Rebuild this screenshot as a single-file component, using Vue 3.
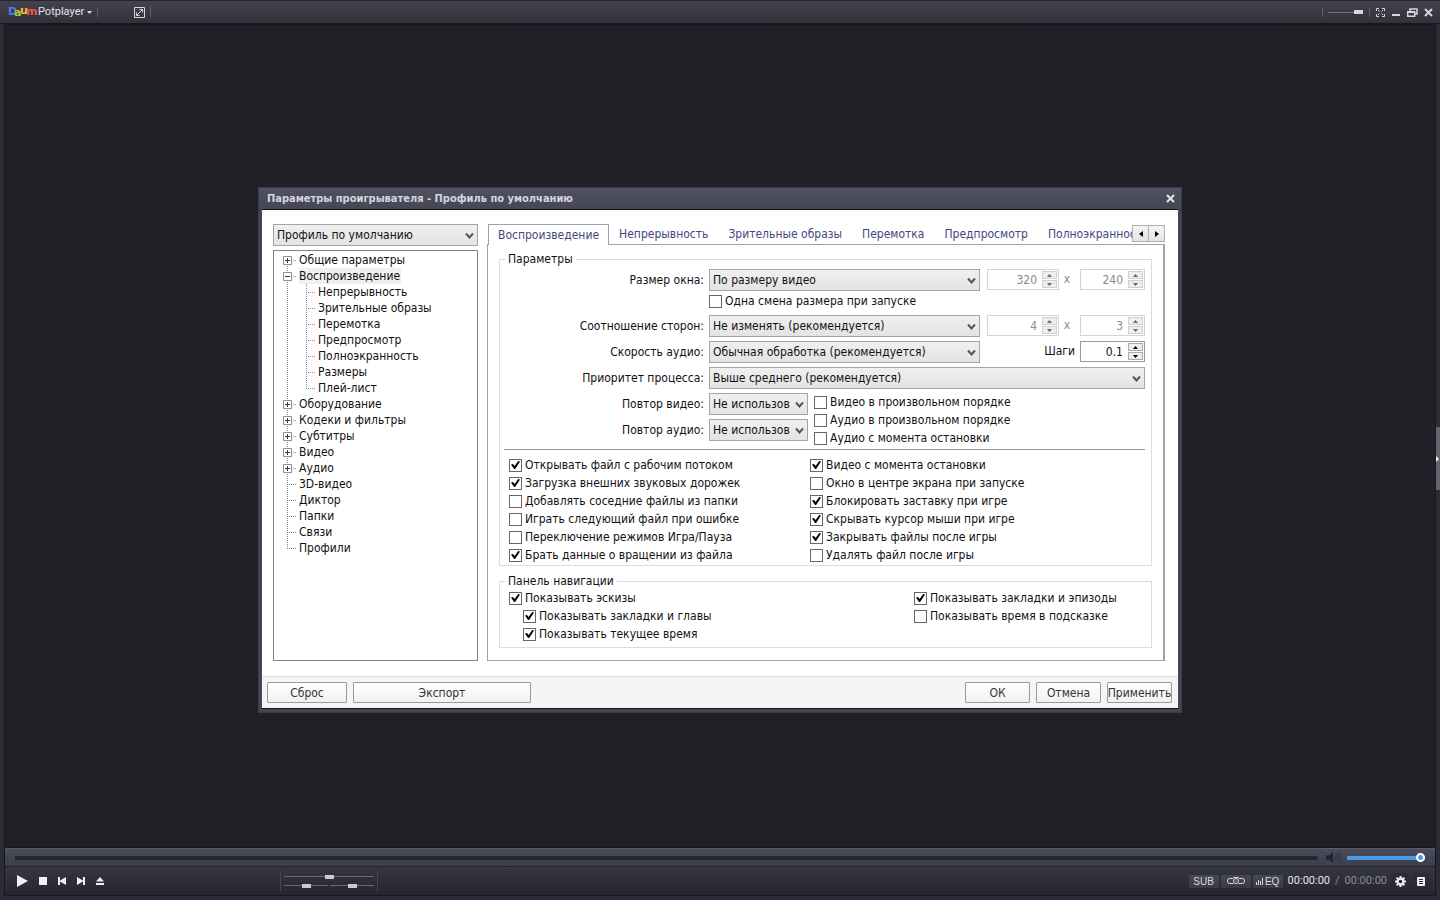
<template>
    <div class="player">
        <header class="title-bar">
            <button type="button" class="app-menu">
                <span class="logo">
                    <span class="logo-d">D</span><span class="logo-a">a</span><span class="logo-u">u</span><span class="logo-m">m</span>
                </span>
                <span class="app-name">Potplayer</span>
                <svg width="5" height="3" viewBox="0 0 5 3"><path d="M0 0h5L2.500 3z" fill="#d6d6e0" /></svg>
            </button>
            <i class="divider"></i>
            <button type="button" class="icon-button expand" aria-label="Развернуть">
                <svg width="11" height="11" viewBox="0 0 11 11" fill="none" stroke="#d6d6e0">
                    <path d="M.5.5h10v10H.5zM3 8l5-5M5.500 2.500h3v3M2.500 5.500v3h3" />
                </svg>
            </button>
            <i class="divider"></i>
            <div class="title-spacer"></div>
            <i class="divider"></i>
            <input v-model="opacity" type="range" class="opacity-slider" aria-label="Прозрачность" />
            <i class="divider"></i>
            <div class="window-buttons">
                <button type="button" class="icon-button" aria-label="Полный экран">
                    <svg width="9" height="9" viewBox="0 0 9 9" fill="none" stroke="#d6d6e0">
                        <path d="M.5 3V.5H3M6 .5h2.500V3M8.500 6v2.500H6M3 8.500H.5V6M2 2l1.500 1.500M7 2L5.500 3.500M7 7L5.500 5.500M2 7l1.500-1.500" />
                    </svg>
                </button>
                <button type="button" class="icon-button" aria-label="Свернуть">
                    <svg width="9" height="9" viewBox="0 0 9 9"><path d="M0 6h8v2H0z" fill="#d6d6e0" /></svg>
                </button>
                <button type="button" class="icon-button" aria-label="Восстановить">
                    <svg width="11" height="9" viewBox="0 0 11 9" fill="none" stroke="#d6d6e0">
                        <path d="M3 3V1h7v5H8" stroke-width="1.500" /><path d="M.7 3.700h7v4.500h-7zM.7 4.200h7" stroke-width="1.400" />
                    </svg>
                </button>
                <button type="button" class="icon-button" aria-label="Закрыть">
                    <svg width="9" height="9" viewBox="0 0 9 9"><path d="M1 1l7 7M8 1L1 8" stroke="#d6d6e0" stroke-width="2" /></svg>
                </button>
            </div>
        </header>

        <main class="stage"></main>

        <footer class="controls">
            <div class="seek-row">
                <input v-model="position" type="range" class="seek" aria-label="Позиция" />
                <button type="button" class="icon-button mute" aria-label="Звук">
                    <svg width="15" height="11" viewBox="0 0 15 11">
                        <path d="M0 3.500h3L7 0v11L3 7.500H0z" fill="#22232c" />
                        <path d="M9 3.500q1.500 2 0 4M11 2q2.500 3.500 0 7M13 1q3 4.500 0 9" fill="none" stroke="#30313c" />
                    </svg>
                </button>
                <input v-model="volume" type="range" class="volume" aria-label="Громкость" />
            </div>
            <div class="button-row">
                <div class="transport">
                    <button v-for="item in transport" :key="item.label" type="button" class="icon-button" :aria-label="item.label">
                        <svg width="11" height="12" viewBox="0 0 11 12"><path :d="item.path" fill="#f0f0f6" /></svg>
                    </button>
                </div>
                <div class="adjusters">
                    <input v-model="adjust.main" type="range" aria-label="Синхронизация" />
                    <div class="adjuster-pair">
                        <input v-model="adjust.left" type="range" aria-label="Субтитры" />
                        <input v-model="adjust.right" type="range" aria-label="Скорость" />
                    </div>
                </div>
                <div class="tags">
                    <button type="button" class="tag">SUB</button>
                    <button type="button" class="tag" aria-label="Снимок">
                        <svg width="18" height="8" viewBox="0 0 18 8" fill="none" stroke="#d8d9e4">
                            <path d="M5.500 1.500H2.500Q.5 1.500.5 4T2.500 6.500h4M12.500 1.500h3q2 0 2 2.500t-2 2.500h-4M5.500 1.500L7 .5h4l1.500 1" />
                            <circle cx="9" cy="4" r="2.500" /><path d="M8.500 4h1" />
                        </svg>
                    </button>
                    <button type="button" class="tag">
                        <svg width="8" height="8" viewBox="0 0 8 8"><path d="M0 5h1v3H0zM2 3h1v5H2zM4 4h1v4H4zM6 1h1v7H6z" fill="#d8d9e4" /></svg>EQ
                    </button>
                </div>
                <div class="time"><span class="elapsed">00:00:00</span><span>/</span><span>00:00:00</span></div>
                <button type="button" class="icon-button tool" aria-label="Настройки">
                    <svg width="11" height="11" viewBox="0 0 11 11">
                        <circle cx="5.500" cy="5.500" r="2.900" fill="none" stroke="#eeeef5" stroke-width="2.200" />
                        <path d="M5.500 0v2M5.500 9v2M0 5.500h2M9 5.500h2M1.600 1.600L3 3M8 8l1.400 1.400M1.600 9.400L3 8M8 3l1.400-1.400" stroke="#eeeef5" stroke-width="2" />
                    </svg>
                </button>
                <button type="button" class="icon-button tool" aria-label="Плей-лист">
                    <svg width="8" height="9" viewBox="0 0 8 9"><rect width="8" height="9" rx="1" fill="#eeeef5" /><path d="M2 2.500h4M2 4.500h4M2 6.500h4" stroke="#2a2b36" /></svg>
                </button>
            </div>
        </footer>

        <button type="button" class="side-handle" aria-label="Боковая панель">
            <svg width="3" height="6" viewBox="0 0 3 6"><path d="M0 0l3 3-3 3z" fill="#f0f0f6" /></svg>
        </button>

        <div class="overlay">
            <section class="dialog" role="dialog" aria-labelledby="dialog-title">
                <div class="dialog-title">
                    <h1 id="dialog-title">Параметры проигрывателя - Профиль по умолчанию</h1>
                    <button type="button" class="icon-button" aria-label="Закрыть окно">
                        <svg width="9" height="9" viewBox="0 0 9 9"><path d="M1 1l7 7M8 1L1 8" stroke="#e4e4ec" stroke-width="2" /></svg>
                    </button>
                </div>

                <div class="dialog-content">
                    <div class="dialog-main">
                        <aside class="sidebar">
                            <span class="select-box">
                                <select aria-label="Профиль">
                                    <option>Профиль по умолчанию</option>
                                </select>
                                <svg class="chevron" width="9" height="8" viewBox="0 0 9 8"><path d="M1 1.500l3.500 4L8 1.500" /></svg>
                            </span>
                            <ul class="tree">
                                <li v-for="node in tree" :key="node.name" class="node">
                                    <div class="node-row">
                                        <button v-if="node.state" type="button" class="toggle" :aria-label="node.name">
                                            <svg width="9" height="9" viewBox="0 0 9 9">
                                                <path d="M.5.5h8v8h-8z" fill="#fff" stroke="#8c8c94" />
                                                <path :d="node.state === 'open' ? 'M2 4.500h5' : 'M2 4.500h5M4.500 2v5'" stroke="#33335a" />
                                            </svg>
                                        </button>
                                        <a href="#" :class="{ current: node.state === 'open' }">{{ node.name }}</a>
                                    </div>
                                    <ul v-if="node.children" class="branch">
                                        <li v-for="child in node.children" :key="child" class="leaf">
                                            <a href="#">{{ child }}</a>
                                        </li>
                                    </ul>
                                </li>
                            </ul>
                        </aside>

                        <div class="settings">
                            <div class="tab-bar">
                                <div class="tabs" role="tablist">
                                    <button
                                        v-for="(tab, index) in tabs"
                                        :key="tab"
                                        type="button"
                                        role="tab"
                                        class="tab"
                                        :class="{ active: index === 0 }"
                                        :aria-selected="index === 0"
                                    >{{ tab }}</button>
                                </div>
                                <div class="tab-scroll">
                                    <button type="button" aria-label="Назад"><svg width="4" height="6" viewBox="0 0 4 6"><path d="M4 0v6L0 3z" /></svg></button>
                                    <button type="button" aria-label="Вперёд"><svg width="4" height="6" viewBox="0 0 4 6"><path d="M0 0v6l4-3z" /></svg></button>
                                </div>
                            </div>

                            <div class="panel">
                                <fieldset>
                                    <legend>Параметры</legend>
                                    <div class="form">
                                        <template v-for="row in rows" :key="row.id">
                                            <label class="caption" :for="row.id">{{ row.label }}</label>
                                            <div class="field">
                                                <div class="field-line">
                                                    <span class="select-box">
                                                        <select :id="row.id">
                                                            <option>{{ row.value }}</option>
                                                        </select>
                                                        <svg class="chevron" width="9" height="8" viewBox="0 0 9 8"><path d="M1 1.500l3.500 4L8 1.500" /></svg>
                                                    </span>
                                                    <template v-if="row.pair">
                                                        <span class="spinner wide disabled">
                                                            <input type="text" :value="row.pair[0]" :aria-label="row.label" disabled />
                                                            <span class="arrows">
                                                                <button type="button" aria-label="Больше" disabled><svg width="5" height="3" viewBox="0 0 5 3"><path d="M0 3h5L2.500 0z" /></svg></button>
                                                                <button type="button" aria-label="Меньше" disabled><svg width="5" height="3" viewBox="0 0 5 3"><path d="M0 0h5L2.500 3z" /></svg></button>
                                                            </span>
                                                        </span>
                                                        <span class="times">x</span>
                                                        <span class="spinner disabled">
                                                            <input type="text" :value="row.pair[1]" :aria-label="row.label" disabled />
                                                            <span class="arrows">
                                                                <button type="button" aria-label="Больше" disabled><svg width="5" height="3" viewBox="0 0 5 3"><path d="M0 3h5L2.500 0z" /></svg></button>
                                                                <button type="button" aria-label="Меньше" disabled><svg width="5" height="3" viewBox="0 0 5 3"><path d="M0 0h5L2.500 3z" /></svg></button>
                                                            </span>
                                                        </span>
                                                    </template>
                                                    <template v-if="row.step">
                                                        <label class="step-label" for="step">Шаги</label>
                                                        <span class="spinner">
                                                            <input id="step" type="text" :value="row.step" />
                                                            <span class="arrows">
                                                                <button type="button" aria-label="Больше"><svg width="5" height="3" viewBox="0 0 5 3"><path d="M0 3h5L2.500 0z" /></svg></button>
                                                                <button type="button" aria-label="Меньше"><svg width="5" height="3" viewBox="0 0 5 3"><path d="M0 0h5L2.500 3z" /></svg></button>
                                                            </span>
                                                        </span>
                                                    </template>
                                                </div>
                                                <label v-if="row.check" class="check once"><input type="checkbox" />{{ row.check }}</label>
                                            </div>
                                        </template>
                                    </div>

                                    <div class="repeat">
                                        <div class="form">
                                            <template v-for="row in repeats" :key="row.id">
                                                <label class="caption" :for="row.id">{{ row.label }}</label>
                                                <span class="select-box">
                                                    <select :id="row.id">
                                                        <option>Не использовать</option>
                                                    </select>
                                                    <svg class="chevron" width="9" height="8" viewBox="0 0 9 8"><path d="M1 1.500l3.500 4L8 1.500" /></svg>
                                                </span>
                                            </template>
                                        </div>
                                        <div class="checks">
                                            <label v-for="item in repeatChecks" :key="item" class="check"><input type="checkbox" />{{ item }}</label>
                                        </div>
                                    </div>

                                    <hr />

                                    <div class="columns">
                                        <div v-for="(column, index) in options" :key="index" class="checks">
                                            <label v-for="item in column" :key="item.text" class="check">
                                                <input v-model="item.on" type="checkbox" />{{ item.text }}
                                            </label>
                                        </div>
                                    </div>
                                </fieldset>

                                <fieldset class="navigation">
                                    <legend>Панель навигации</legend>
                                    <div class="columns">
                                        <div v-for="(column, index) in navigation" :key="index" class="checks">
                                            <label v-for="item in column" :key="item.text" class="check" :class="{ nested: item.nested }">
                                                <input v-model="item.on" type="checkbox" />{{ item.text }}
                                            </label>
                                        </div>
                                    </div>
                                </fieldset>
                            </div>
                        </div>
                    </div>

                    <div class="dialog-footer">
                        <button type="button" class="reset">Сброс</button>
                        <button type="button" class="export">Экспорт</button>
                        <span class="footer-spacer"></span>
                        <button type="button">ОК</button>
                        <button type="button">Отмена</button>
                        <button type="button">Применить</button>
                    </div>
                </div>
            </section>
        </div>
    </div>
</template>

<script setup>
import { reactive, ref } from 'vue'

const opacity = ref(100)
const position = ref(0)
const volume = ref(100)
const adjust = reactive({ main: 50, left: 50, right: 50 })

const transport = [
    { label: 'Воспроизвести', path: 'M0 0l11 6-11 6z' },
    { label: 'Стоп', path: 'M1 2h8v8H1z' },
    { label: 'Назад', path: 'M1 2h2v3.500L9 2v8L3 6.500V10H1z' },
    { label: 'Вперёд', path: 'M9 2H7v3.500L1 2v8l6-3.500V10h2z' },
    { label: 'Открыть', path: 'M5 2l4 4.500H1zM1 8h8v2H1z' }
]

const tree = [
    { name: 'Общие параметры', state: 'closed' },
    {
        name: 'Воспроизведение',
        state: 'open',
        children: ['Непрерывность', 'Зрительные образы', 'Перемотка', 'Предпросмотр', 'Полноэкранность', 'Размеры', 'Плей-лист']
    },
    { name: 'Оборудование', state: 'closed' },
    { name: 'Кодеки и фильтры', state: 'closed' },
    { name: 'Субтитры', state: 'closed' },
    { name: 'Видео', state: 'closed' },
    { name: 'Аудио', state: 'closed' },
    { name: '3D-видео' },
    { name: 'Диктор' },
    { name: 'Папки' },
    { name: 'Связи' },
    { name: 'Профили' }
]

const tabs = ['Воспроизведение', 'Непрерывность', 'Зрительные образы', 'Перемотка', 'Предпросмотр', 'Полноэкранность']

const rows = [
    { id: 'window-size', label: 'Размер окна:', value: 'По размеру видео', pair: [320, 240], check: 'Одна смена размера при запуске' },
    { id: 'aspect', label: 'Соотношение сторон:', value: 'Не изменять (рекомендуется)', pair: [4, 3] },
    { id: 'audio-speed', label: 'Скорость аудио:', value: 'Обычная обработка (рекомендуется)', step: '0.1' },
    { id: 'priority', label: 'Приоритет процесса:', value: 'Выше среднего (рекомендуется)' }
]

const repeats = [
    { id: 'repeat-video', label: 'Повтор видео:' },
    { id: 'repeat-audio', label: 'Повтор аудио:' }
]

const repeatChecks = ['Видео в произвольном порядке', 'Аудио в произвольном порядке', 'Аудио с момента остановки']

const options = reactive([
    [
        { text: 'Открывать файл с рабочим потоком', on: true },
        { text: 'Загрузка внешних звуковых дорожек', on: true },
        { text: 'Добавлять соседние файлы из папки', on: false },
        { text: 'Играть следующий файл при ошибке', on: false },
        { text: 'Переключение режимов Игра/Пауза', on: false },
        { text: 'Брать данные о вращении из файла', on: true }
    ],
    [
        { text: 'Видео с момента остановки', on: true },
        { text: 'Окно в центре экрана при запуске', on: false },
        { text: 'Блокировать заставку при игре', on: true },
        { text: 'Скрывать курсор мыши при игре', on: true },
        { text: 'Закрывать файлы после игры', on: true },
        { text: 'Удалять файл после игры', on: false }
    ]
])

const navigation = reactive([
    [
        { text: 'Показывать эскизы', on: true },
        { text: 'Показывать закладки и главы', on: true, nested: true },
        { text: 'Показывать текущее время', on: true, nested: true }
    ],
    [
        { text: 'Показывать закладки и эпизоды', on: true },
        { text: 'Показывать время в подсказке', on: false }
    ]
])
</script>

<style>
body {
    background: #202127;
}
</style>

<style scoped>
* {
    box-sizing: border-box;
}

.player {
    position: relative;
    display: flex;
    flex-direction: column;
    height: 100vh;
    padding: 0 4px 4px;
    background: #2b2c37;
    font-family: Tahoma, "DejaVu Sans Condensed", "Noto Sans", sans-serif;
    font-size: 12px;
    line-height: 16px;
    overflow: hidden;
}

button,
input,
select {
    margin: 0;
    padding: 0;
    border: 0;
    border-radius: 0;
    color: inherit;
    font: inherit;
}

svg {
    display: block;
    flex-shrink: 0;
}

.icon-button {
    display: flex;
    align-items: center;
    justify-content: center;
    background: none;
}

/* Title bar */
.title-bar {
    display: flex;
    align-items: center;
    height: 24px;
    margin: 0 -4px;
    padding: 0 4px 0 8px;
    background: linear-gradient(#42434f, #30313b);
    border-top: 1px solid #24252f;
    border-bottom: 1px solid #16171c;
    flex-shrink: 0;
}

.app-menu {
    display: flex;
    align-items: center;
    gap: 3px;
    background: none;
    color: #e2e2ea;
    font-family: Roboto, sans-serif;
    font-size: 11px;
}

.logo {
    display: flex;
    height: 16px;
    font-family: "DejaVu Sans", sans-serif;
    font-size: 11px;
    font-weight: bold;
    line-height: 14px;
}

.logo span {
    width: 6px;
}

.logo-d {
    color: #4f7de8;
    align-self: center;
}

.logo-a {
    color: #a9c93a;
    align-self: flex-end;
}

.logo-u {
    color: #f2c12e;
    align-self: flex-start;
}

.logo .logo-m {
    width: 9px;
    color: #ee5548;
    align-self: center;
}

.divider {
    width: 1px;
    height: 10px;
    margin-left: 5px;
    background: #5c5d6a;
}

.expand {
    margin-left: 36px;
}

.title-spacer {
    flex: 1;
}

.opacity-slider {
    width: 35px;
    height: 9px;
    margin: 0 1px 0 5px;
    appearance: none;
    background: linear-gradient(#71727e, #71727e) center / 100% 1px no-repeat;
}

.opacity-slider::-webkit-slider-thumb {
    width: 9px;
    height: 4px;
    appearance: none;
    background: #d6d6e0;
}

.window-buttons {
    display: flex;
    margin-left: 2px;
}

.window-buttons .icon-button {
    width: 16px;
    height: 16px;
}

/* Video area */
.stage {
    flex: 1;
    background: #202127;
    border: 1px solid #18191e;
}

/* Playback controls */
.controls {
    flex-shrink: 0;
    border: 1px solid #16171c;
    border-top: 0;
    color: #d8d9e4;
}

.seek-row {
    display: flex;
    align-items: center;
    height: 19px;
    padding: 0 10px;
    background: linear-gradient(#4b4c5a, #3d3e4b);
    border-top: 1px solid #5a5b69;
    border-bottom: 1px solid #23242c;
}

.seek {
    flex: 1;
    height: 4px;
    appearance: none;
    background: #262731;
    border-radius: 2px;
}

.seek::-webkit-slider-thumb {
    width: 1px;
    height: 4px;
    appearance: none;
    background: #262731;
}

.mute {
    margin: 0 6px 0 8px;
}

.volume {
    width: 78px;
    height: 9px;
    appearance: none;
    background: linear-gradient(#489de2, #489de2) center / 100% 4px no-repeat;
}

.volume::-webkit-slider-thumb {
    width: 9px;
    height: 9px;
    appearance: none;
    background: #489de2;
    border: 2px solid #fff;
    border-radius: 50%;
}

.button-row {
    display: flex;
    align-items: center;
    height: 28px;
    padding: 0 6px 0 12px;
    background: linear-gradient(#363743, #24252e);
}

.transport {
    display: flex;
    gap: 8px;
}

.transport .icon-button:first-child {
    margin-right: 2px;
}

.adjusters {
    display: flex;
    flex-direction: column;
    justify-content: center;
    gap: 5px;
    width: 98px;
    height: 20px;
    margin: 0 auto 0 174px;
    padding: 0 3px;
    border-left: 1px solid #464753;
    border-right: 1px solid #464753;
}

.adjusters input {
    width: 100%;
    min-width: 0;
    height: 4px;
    appearance: none;
    background: linear-gradient(#696a77, #696a77) center / 100% 1px no-repeat;
}

.adjusters input::-webkit-slider-thumb {
    width: 9px;
    height: 4px;
    appearance: none;
    background: #c9cad6;
}

.adjuster-pair {
    display: flex;
    gap: 2px;
}

.tags {
    display: flex;
    gap: 2px;
}

.tag {
    display: flex;
    align-items: center;
    justify-content: center;
    gap: 1px;
    width: 30px;
    height: 13px;
    background: linear-gradient(#474855, #3a3b47);
    font-family: "Liberation Sans", sans-serif;
    font-size: 10px;
    line-height: 13px;
}

.time {
    display: flex;
    gap: 5px;
    margin: 0 5px;
    color: #8b8c98;
    font-family: Roboto, sans-serif;
    font-size: 11px;
}

.elapsed {
    color: #e4e4ee;
}

.tool {
    width: 16px;
    height: 16px;
    background: #2a2b36;
}

.tool + .tool {
    margin-left: 5px;
}

.side-handle {
    position: absolute;
    top: calc(50% - 23px);
    right: 0;
    display: flex;
    align-items: center;
    width: 4px;
    height: 63px;
    background: #646572;
}

/* Settings window */
.overlay {
    position: absolute;
    inset: 0;
    display: grid;
    place-items: center;
    pointer-events: none;
}

.dialog {
    width: 924px;
    max-width: 100%;
    padding: 0 3px 3px;
    background: #464753;
    border: 1px solid #3a3b46;
    color: #111;
    pointer-events: auto;
}

.dialog-title {
    display: flex;
    align-items: center;
    justify-content: space-between;
    height: 21px;
    margin: 0 -3px;
    padding: 0 6px 0 8px;
    background: linear-gradient(#505162, #464752);
}

.dialog-title h1 {
    margin: 0;
    color: #d4d5e0;
    font-size: 11px;
    font-weight: bold;
}

.dialog-content {
    background: #fff;
    border: 1px solid #111218;
    border-width: 1px 0;
}

.dialog-main {
    display: flex;
    gap: 9px;
    padding: 14px 13px 15px 11px;
}

.sidebar {
    display: flex;
    flex-direction: column;
    gap: 4px;
    width: 205px;
    flex-shrink: 0;
}

.select-box {
    position: relative;
    display: block;
    min-width: 0;
}

.select-box select {
    display: block;
    width: 100%;
    height: 22px;
    padding: 0 17px 0 3px;
    appearance: none;
    background: linear-gradient(#f0f0f0, #e3e3e3);
    border: 1px solid #a5a5a5;
}

.chevron {
    position: absolute;
    top: 8px;
    right: 4px;
    fill: none;
    stroke: #555;
    stroke-width: 2;
    pointer-events: none;
}

.tree {
    flex: 1;
    margin: 0;
    padding: 1px 9px;
    border: 1px solid #828282;
    list-style: none;
}

.tree a {
    padding-right: 1px;
    color: inherit;
    text-decoration: none;
}

.tree .current {
    background: #f0f0f0;
}

.node {
    padding-left: 16px;
    background: repeating-linear-gradient(#888 0 1px, transparent 1px 2px) 4px 0 / 1px 100% no-repeat;
}

.node:first-child {
    background-position: 4px 8px;
}

.node:last-child {
    background-size: 1px 9px;
}

.node-row {
    display: flex;
    align-items: center;
    height: 16px;
    margin-left: -12px;
    padding-left: 12px;
    background: repeating-linear-gradient(90deg, #888 0 1px, transparent 1px 2px) 0 8px / 9px 1px no-repeat;
}

.toggle {
    margin: 0 7px 0 -16px;
    background: none;
}

.branch {
    margin: 0;
    padding: 0 0 0 7px;
    list-style: none;
}

.leaf {
    height: 16px;
    padding-left: 12px;
    background:
        repeating-linear-gradient(#888 0 1px, transparent 1px 2px) 0 0 / 1px 100% no-repeat,
        repeating-linear-gradient(90deg, #888 0 1px, transparent 1px 2px) 0 8px / 9px 1px no-repeat;
}

.leaf:last-child {
    background-size: 1px 9px, 9px 1px;
}

.settings {
    flex: 1;
    min-width: 0;
}

.tab-bar {
    display: flex;
    align-items: flex-start;
    height: 20px;
}

.tabs {
    display: flex;
    flex: 1;
    min-width: 0;
    height: 21px;
    padding-left: 1px;
    overflow: hidden;
}

.tab {
    flex-shrink: 0;
    padding: 0 10px 2px;
    background: none;
    color: #44477c;
}

.tab.active {
    padding: 0 9px;
    background: #fff;
    border: 1px solid #a0a0aa;
    border-bottom: 0;
}

.tab-scroll {
    display: flex;
    margin-top: 1px;
}

.tab-scroll button {
    display: flex;
    align-items: center;
    justify-content: center;
    width: 17px;
    height: 17px;
    background: linear-gradient(#f4f4f4, #e4e4e4);
    border: 1px solid #b0b0b0;
}

.tab-scroll button + button {
    margin-left: -1px;
}

.panel {
    padding: 6px 11px 12px 11px;
    border: 1px solid #a0a0a8;
    border-right-width: 2px;
}

fieldset {
    min-width: 0;
    margin: 0;
    padding: 0 6px 1px 0;
    border: 1px solid #dcdcdc;
}

legend {
    margin-left: 5px;
    padding: 0 3px;
}

.form {
    display: grid;
    grid-template-columns: 204px minmax(0, 1fr);
    gap: 4px 5px;
    margin-top: 2px;
}

.caption {
    line-height: 22px;
    text-align: right;
    white-space: nowrap;
}

.field-line {
    display: flex;
}

.field-line .select-box {
    flex: 1;
}

.spinner {
    display: flex;
    width: 65px;
    height: 21px;
    padding: 1px;
    border: 1px solid #9a9a9a;
}

.spinner.wide {
    width: 72px;
    margin-left: 7px;
}

.spinner input {
    flex: 1;
    width: 0;
    padding-right: 5px;
    background: #fff;
    text-align: right;
}

.disabled {
    border-color: #d4d4d4;
    color: #8a8a8a;
    fill: #666;
}

.arrows {
    display: flex;
    flex-direction: column;
    gap: 1px;
    width: 15px;
}

.arrows button {
    display: flex;
    flex: 1;
    align-items: center;
    justify-content: center;
    background: #eee;
    border: 1px solid #aaa;
}

.disabled .arrows button {
    border-color: #d0d0d0;
}

.times {
    width: 21px;
    padding-right: 5px;
    color: #8a8a8a;
    line-height: 20px;
    text-align: center;
}

.step-label {
    width: 100px;
    padding-right: 5px;
    line-height: 21px;
    text-align: right;
}

.check {
    display: flex;
    align-items: center;
    gap: 3px;
    height: 18px;
    white-space: nowrap;
}

.check.once {
    height: 20px;
}

.check input {
    position: relative;
    width: 13px;
    height: 13px;
    appearance: none;
    background: #fff;
    border: 1px solid #666;
    flex-shrink: 0;
}

.check input:checked::before {
    position: absolute;
    inset: 1px;
    background: #000;
    clip-path: polygon(0 45%, 22% 40%, 40% 62%, 80% 6%, 100% 12%, 46% 94%, 34% 94%);
    content: "";
}

.repeat {
    display: flex;
    align-items: flex-start;
    gap: 6px;
    margin-top: 4px;
}

.repeat .form {
    grid-template-columns: 204px 99px;
    margin-top: 0;
}

hr {
    height: 1px;
    margin: 2px 0 6px 4px;
    background: #999;
    border: 0;
}

.columns {
    display: grid;
    grid-template-columns: 301px 1fr;
    padding-left: 9px;
}

.navigation {
    margin-top: 7px;
    padding-bottom: 4px;
}

.navigation .columns {
    grid-template-columns: 405px 1fr;
}

.check.nested {
    margin-left: 14px;
}

.dialog-footer {
    display: flex;
    gap: 6px;
    padding: 5px 6px 5px 5px;
    background: #f5f5f5;
    border-top: 1px solid #dcdcdc;
}

.dialog-footer button {
    display: flex;
    align-items: center;
    justify-content: center;
    width: 65px;
    height: 21px;
    background: linear-gradient(#fff, #f1f1f1);
    border: 1px solid #9a9a9a;
    border-radius: 1px;
    color: #333;
}

.dialog-footer .reset {
    width: 80px;
}

.dialog-footer .export {
    width: 178px;
}

.footer-spacer {
    flex: 1;
}
</style>
